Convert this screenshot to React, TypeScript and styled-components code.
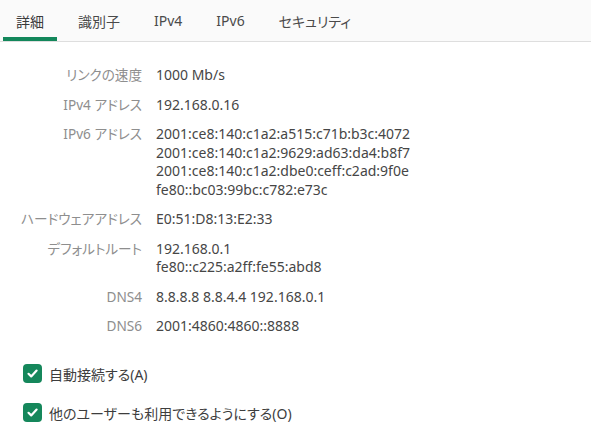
import React from 'react';
import { createGlobalStyle, styled } from 'styled-components';

const GlobalStyle = createGlobalStyle`
  html, body {
    margin: 0;
    padding: 0;
    background: #ffffff;
  }
  body {
    font-family: "Noto Sans", "Noto Sans CJK JP", sans-serif;
    font-feature-settings: "palt" 1;
    color: #3d3d3d;
  }
`;

const Page = styled.div`
  width: 591px;
  height: 434px;
  overflow: hidden;
`;

const TabBar = styled.div`
  display: flex;
  gap: 8px;
  padding-left: 3px;
  height: 41px;
  background: #fafafa;
  border-bottom: 1px solid #dedede;
`;

const Tab = styled.div<{ $active?: boolean }>`
  display: flex;
  align-items: center;
  padding: 0 13px;
  font-size: 14px;
  color: ${(p) => (p.$active ? '#3a3a3a' : '#4a4a4a')};
  box-shadow: ${(p) => (p.$active ? 'inset 0 -4px 0 #13875b' : 'none')};
`;

const Details = styled.div`
  display: grid;
  grid-template-columns: 142px auto;
  column-gap: 14px;
  row-gap: 11px;
  padding-top: 24px;
  font-size: 14px;
  line-height: 18.5px;
`;

const Label = styled.div`
  text-align: right;
  color: #8e8e8e;
  font-size: 13.6px;
`;

const Value = styled.div`
  color: #464646;
  white-space: pre;
`;

const Options = styled.div`
  display: flex;
  flex-direction: column;
  gap: 19px;
  padding: 28px 0 0 23px;
`;

const CheckRow = styled.label`
  display: flex;
  align-items: center;
  gap: 7px;
  font-size: 14px;
  color: #3d3d3d;
`;

const Box = styled.span`
  width: 19px;
  height: 19px;
  border-radius: 4px;
  background: #15875b;
  display: flex;
  align-items: center;
  justify-content: center;
`;

const Check = () => (
  <Box>
    <svg width="13" height="13" viewBox="0 0 13 13">
      <path d="M2.5 6.8 L5.2 9.4 L10.6 3.6" fill="none" stroke="#fff" strokeWidth="2.2" strokeLinecap="round" strokeLinejoin="round" />
    </svg>
  </Box>
);

const rows: [string, string[]][] = [
  ['リンクの速度', ['1000 Mb/s']],
  ['IPv4 アドレス', ['192.168.0.16']],
  [
    'IPv6 アドレス',
    [
      '2001:ce8:140:c1a2:a515:c71b:b3c:4072',
      '2001:ce8:140:c1a2:9629:ad63:da4:b8f7',
      '2001:ce8:140:c1a2:dbe0:ceff:c2ad:9f0e',
      'fe80::bc03:99bc:c782:e73c',
    ],
  ],
  ['ハードウェアアドレス', ['E0:51:D8:13:E2:33']],
  ['デフォルトルート', ['192.168.0.1', 'fe80::c225:a2ff:fe55:abd8']],
  ['DNS4', ['8.8.8.8 8.8.4.4 192.168.0.1']],
  ['DNS6', ['2001:4860:4860::8888']],
];

const tabs = ['詳細', '識別子', 'IPv4', 'IPv6', 'セキュリティ'];

export default function App() {
  return (
    <Page>
      <GlobalStyle />
      <TabBar>
        {tabs.map((t, i) => (
          <Tab key={t} $active={i === 0}>
            {t}
          </Tab>
        ))}
      </TabBar>
      <Details>
        {rows.map(([label, values]) => (
          <React.Fragment key={label}>
            <Label>{label}</Label>
            <Value>{values.join('\n')}</Value>
          </React.Fragment>
        ))}
      </Details>
      <Options>
        <CheckRow>
          <Check />
          自動接続する(A)
        </CheckRow>
        <CheckRow>
          <Check />
          他のユーザーも利用できるようにする(O)
        </CheckRow>
      </Options>
    </Page>
  );
}
